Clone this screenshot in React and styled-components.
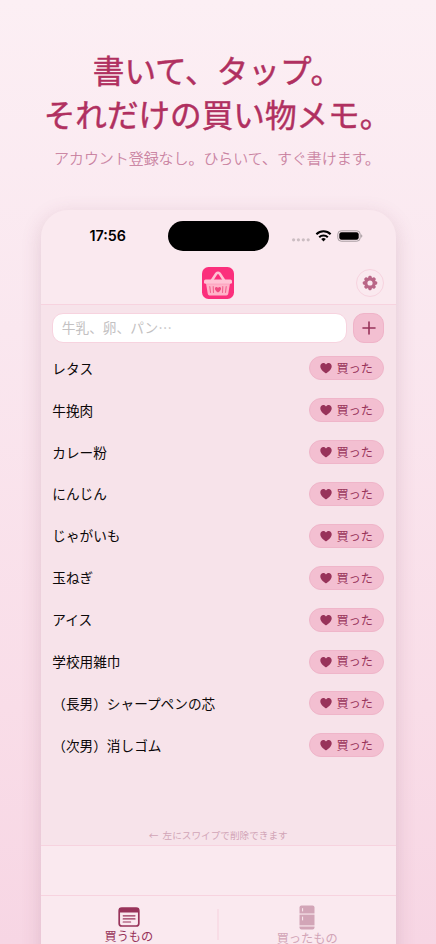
import React from "react";
import styled, { createGlobalStyle } from "styled-components";

const Colors = {
  title: "#b03060",
  subtitle: "#c77a9b",
  berry: "#98335a",
  line: "#f7d3df",
  panel: "#fae9ef",
  list: "#f7e3ea",
  button: "#f3bfd1",
  muted: "#d2a5b7"
};

const GlobalStyle = createGlobalStyle`
  * {
    box-sizing: border-box;
  }
  body {
    margin: 0;
    font-family: "Noto Sans CJK JP", sans-serif;
  }
`;

const Page = styled.div`
  width: 436px;
  height: 944px;
  overflow: hidden;
  display: flex;
  flex-direction: column;
  align-items: center;
  padding-top: 48px;
  background: linear-gradient(180deg, #fceff4 0%, #fae7ef 35%, #f9dde8 75%, #f7d6e4 100%);
`;

const Title = styled.h1`
  margin: 0 1px 0 0;
  font-size: 31.6px;
  line-height: 43.6px;
  font-weight: 400;
  color: ${Colors.title};
  -webkit-text-stroke: 0.45px ${Colors.title};
  text-align: center;
  white-space: nowrap;
`;

const Subtitle = styled.p`
  margin: 11px 2px 0 0;
  font-size: 14.95px;
  line-height: 24px;
  font-weight: 300;
  color: ${Colors.subtitle};
  -webkit-text-stroke: 0.2px ${Colors.subtitle};
  white-space: nowrap;
`;

const Phone = styled.div`
  flex: none;
  width: 355px;
  height: 760px;
  margin-top: 39.8px;
  border-radius: 27px 27px 0 0;
  overflow: hidden;
  display: flex;
  flex-direction: column;
  background: ${Colors.panel};
  box-shadow: 0 5px 20px rgba(120, 60, 90, 0.18);
`;

const StatusBar = styled.div`
  height: 52px;
  flex: none;
  display: grid;
  grid-template-columns: 127px 101px 127px;
  align-items: center;
`;

const Clock = styled.div`
  padding-left: 7.5px;
  text-align: center;
  font-family: Inter, sans-serif;
  font-size: 14.3px;
  font-weight: 600;
  color: #000;
`;

const Island = styled.div`
  height: 30px;
  border-radius: 15px;
  background: #000;
`;

const StatusIcons = styled.div`
  display: flex;
  padding-left: 22.5px;
`;

const Header = styled.header`
  height: 43px;
  flex: none;
  display: grid;
  grid-template-columns: 1fr 32px 1fr;
  align-items: center;
  padding: 0 11.2px;
  border-bottom: 1px solid ${Colors.line};
`;

const Logo = styled.svg`
  grid-column: 2;
  display: block;
`;

const SettingsButton = styled.button`
  justify-self: end;
  width: 28px;
  height: 28px;
  padding: 0;
  display: flex;
  align-items: center;
  justify-content: center;
  border: 1px solid ${Colors.line};
  border-radius: 50%;
  background: transparent;
`;

const Content = styled.main`
  height: 541px;
  flex: none;
  display: flex;
  flex-direction: column;
  padding: 8px 11.2px 0 11.8px;
  background: ${Colors.list};
  border-bottom: 1px solid ${Colors.line};
`;

const Entry = styled.div`
  display: flex;
  gap: 6px;
  margin-bottom: 4.3px;
`;

const Input = styled.input`
  flex: 1;
  min-width: 0;
  height: 30px;
  padding: 0 8.5px 1px;
  border: 1px solid ${Colors.line};
  border-radius: 11px;
  background: #fff;
  font-family: inherit;
  font-size: 13.7px;
  &::placeholder {
    color: #c3c1c2;
  }
`;

const AddButton = styled.button`
  width: 31.5px;
  height: 30px;
  padding: 0;
  display: flex;
  align-items: center;
  justify-content: center;
  border: 1px solid #efb3c8;
  border-radius: 11px;
  background: ${Colors.button};
`;

const Row = styled.div`
  height: 41.92px;
  display: flex;
  align-items: center;
  justify-content: space-between;
  font-size: 13.65px;
  color: #0c0809;
`;

const ItemName = styled.span`
  margin-bottom: 1px;
`;

const BoughtButton = styled.button`
  width: 75.7px;
  height: 24px;
  padding: 0;
  display: flex;
  align-items: center;
  justify-content: center;
  gap: 4.5px;
  border: 1px solid #efb5c9;
  border-radius: 12px;
  background: ${Colors.button};
  color: ${Colors.berry};
  font-family: inherit;
  font-size: 12.2px;
  line-height: 1;
`;

const Hint = styled.div`
  margin-top: auto;
  padding-bottom: 3px;
  text-align: center;
  font-size: 9.65px;
  line-height: 14px;
  word-spacing: 2px;
  color: ${Colors.muted};
`;

const Banner = styled.div`
  height: 50px;
  flex: none;
  border-bottom: 1px solid ${Colors.line};
`;

const Tabs = styled.nav`
  display: flex;
  padding-top: 9px;
`;

const Tab = styled.div`
  flex: 1;
  height: 60px;
  display: flex;
  flex-direction: column;
  align-items: center;
  gap: ${props => (props.$active ? "3px" : "2px")};
  padding-top: ${props => (props.$active ? "2px" : "0")};
  font-size: 12.2px;
  line-height: 13px;
  color: ${props => (props.$active ? Colors.berry : Colors.muted)};
  svg {
    display: block;
  }
`;

const Divider = styled.div`
  width: 1.5px;
  height: 31px;
  margin-top: 4px;
  background: #f8dde6;
`;

const items = [
  "レタス",
  "牛挽肉",
  "カレー粉",
  "にんじん",
  "じゃがいも",
  "玉ねぎ",
  "アイス",
  "学校用雑巾",
  "（長男）シャープペンの芯",
  "（次男）消しゴム"
];

function SignalIcons() {
  return (
    <svg width="72" height="14" viewBox="0 0 72 14">
      <g fill="#cbbdc2">
        <circle cx="2.6" cy="10.8" r="1.6" />
        <circle cx="7.4" cy="10.8" r="1.6" />
        <circle cx="12.3" cy="10.8" r="1.6" />
        <circle cx="17.2" cy="10.8" r="1.6" />
      </g>
      <g fill="none" stroke="#000" strokeWidth="2.1">
        <path d="M25.4 5.2 A10.2 10.2 0 0 1 39.6 5.2" />
        <path d="M28.2 8.2 A6.2 6.2 0 0 1 36.8 8.2" />
      </g>
      <path d="M32.5 12.4 L30.2 10.1 A3.3 3.3 0 0 1 34.8 10.1 Z" fill="#000" />
      <rect x="46.8" y="1.8" width="22.4" height="10.4" rx="3.4" fill="none" stroke="#a69ca0" />
      <rect x="48.3" y="3.3" width="19.4" height="7.4" rx="2.2" fill="#000" />
      <path d="M70.2 5.2 A2 2 0 0 1 70.2 8.8 Z" fill="#a69ca0" />
    </svg>
  );
}

function BasketLogo() {
  return (
    <Logo width="32" height="32" viewBox="0 0 32 32">
      <rect width="32" height="32" rx="6.5" fill="#fb2f7c" />
      <path
        d="M9.8 13.5 L14.3 6.6 Q16 4.8 17.7 6.6 L22.2 13.5"
        fill="none"
        stroke="#ffc2d3"
        strokeWidth="2.6"
        strokeLinecap="round"
      />
      <path d="M3.8 15 H28.2 L26.2 27 Q25.9 28.4 24.4 28.4 H7.6 Q6.1 28.4 5.8 27 Z" fill="#ffb3c9" />
      <rect x="2" y="12.6" width="28" height="4.2" rx="1.6" fill="#ffc4d5" />
      <path d="M4.5 17.1 H27.5" stroke="#fb93b2" strokeWidth="0.5" />
      <path
        d="M7.8 19.6 L8.5 25.4 M11.2 19.6 L11.5 25.4 M20.8 19.6 L20.5 25.4 M24.2 19.6 L23.5 25.4"
        stroke="#f0648f"
        strokeWidth="1.1"
        strokeLinecap="round"
      />
      <path
        d="M16 25.6 C13 23.4 12.6 22 13.1 20.7 C13.7 19.5 15.4 19.7 16 21 C16.6 19.7 18.3 19.5 18.9 20.7 C19.4 22 19 23.4 16 25.6 Z"
        fill="#f14980"
      />
    </Logo>
  );
}

function GearIcon() {
  const teeth = [0, 45, 90, 135, 180, 225, 270, 315];
  return (
    <svg width="16" height="16" viewBox="0 0 16 16">
      <circle cx="8" cy="8" r="4.2" fill="none" stroke="#b96687" strokeWidth="3.2" />
      {teeth.map(angle => (
        <path
          key={angle}
          d="M6 3.4 L6.5 1.4 Q6.7 0.8 7.3 0.8 H8.7 Q9.3 0.8 9.5 1.4 L10 3.4 Z"
          fill="#b96687"
          transform={`rotate(${angle} 8 8)`}
        />
      ))}
    </svg>
  );
}

function HeartIcon() {
  return (
    <svg width="12" height="12" viewBox="0 0 12 12">
      <path
        d="M6 11.3 C5.6 11.3 0.3 8 0.3 4.2 C0.3 2.2 1.6 0.9 3.3 0.9 C4.5 0.9 5.5 1.5 6 2.6 C6.5 1.5 7.5 0.9 8.7 0.9 C10.4 0.9 11.7 2.2 11.7 4.2 C11.7 8 6.4 11.3 6 11.3 Z"
        fill={Colors.berry}
      />
    </svg>
  );
}

function NoteIcon() {
  return (
    <svg width="22" height="20" viewBox="0 0 22 20">
      <rect x="1.2" y="1.2" width="19.6" height="17.8" rx="2.6" fill="none" stroke={Colors.berry} strokeWidth="1.7" />
      <path d="M1 5.6 V3 Q1 1 3 1 H19 Q21 1 21 3 V5.6 Z" fill={Colors.berry} />
      <path
        d="M5.2 8.8 H17 M5.2 11.9 H17 M5.2 15 H12.6"
        stroke={Colors.berry}
        strokeWidth="1.2"
        strokeLinecap="round"
      />
    </svg>
  );
}

function FridgeIcon() {
  return (
    <svg width="16" height="25" viewBox="0 0 16 25">
      <path d="M0.5 8.4 V2.6 Q0.5 0.6 2.5 0.6 H13.5 Q15.5 0.6 15.5 2.6 V8.4 Z" fill={Colors.muted} />
      <rect x="0.5" y="9.6" width="15" height="10.8" fill={Colors.muted} />
      <path d="M0.5 21.6 H15.5 V22.4 Q15.5 24.4 13.5 24.4 H2.5 Q0.5 24.4 0.5 22.4 Z" fill={Colors.muted} />
      <path d="M3.6 3.6 V6 M3.6 12 V15" stroke={Colors.panel} strokeWidth="1" strokeLinecap="round" />
    </svg>
  );
}

function Item({ name }) {
  return (
    <Row>
      <ItemName>{name}</ItemName>
      <BoughtButton>
        <HeartIcon />
        買った
      </BoughtButton>
    </Row>
  );
}

export default function App() {
  return (
    <Page>
      <GlobalStyle />
      <Title>
        書いて、タップ。
        <br />
        それだけの買い物メモ。
      </Title>
      <Subtitle>アカウント登録なし。ひらいて、すぐ書けます。</Subtitle>
      <Phone>
        <StatusBar>
          <Clock>17:56</Clock>
          <Island />
          <StatusIcons>
            <SignalIcons />
          </StatusIcons>
        </StatusBar>
        <Header>
          <BasketLogo />
          <SettingsButton>
            <GearIcon />
          </SettingsButton>
        </Header>
        <Content>
          <Entry>
            <Input placeholder="牛乳、卵、パン⋯" />
            <AddButton>
              <svg width="14" height="14" viewBox="0 0 14 14">
                <path d="M7 1 V13 M1 7 H13" stroke={Colors.berry} strokeWidth="1.6" strokeLinecap="round" />
              </svg>
            </AddButton>
          </Entry>
          {items.map(name => (
            <Item key={name} name={name} />
          ))}
          <Hint>← 左にスワイプで削除できます</Hint>
        </Content>
        <Banner />
        <Tabs>
          <Tab $active>
            <NoteIcon />
            買うもの
          </Tab>
          <Divider />
          <Tab>
            <FridgeIcon />
            買ったもの
          </Tab>
        </Tabs>
      </Phone>
    </Page>
  );
}
